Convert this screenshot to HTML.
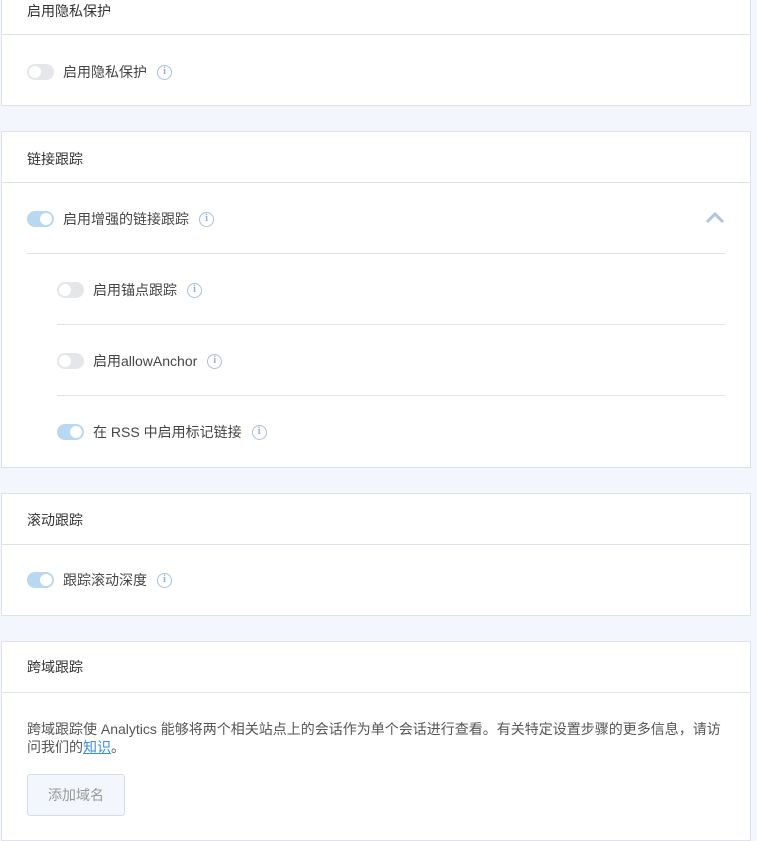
<!DOCTYPE html>
<html><head><meta charset="utf-8"><style>
*{margin:0;padding:0;box-sizing:border-box}
body{width:757px;height:821px;overflow:hidden;background:#f3f6fc;font-family:"Liberation Sans","Noto Sans CJK SC",sans-serif;font-size:14px;color:#444;position:relative}
.card{position:absolute;left:1px;width:750px;background:#fff;border:1px solid #dde3ec}
.hd{position:absolute;left:25px;font-size:14px;color:#333}
.line{position:absolute;height:1px;background:#dde3ec}
.row{position:absolute;display:flex;align-items:center;height:20px;white-space:nowrap}
.tg{width:27px;height:16px;border-radius:8px;background:#e4e6ea;position:relative;margin-right:9px}
.tg::after{content:"";position:absolute;left:2px;top:2px;width:12px;height:12px;border-radius:50%;background:#fff}
.tg.on{background:#b8d7f0}
.tg.on::after{left:13px}
.info{width:15px;height:15px;border:1.5px solid #a8c0d8;border-radius:50%;margin-left:10px;color:#8fb0cf;font-size:10px;line-height:12px;text-align:center;font-family:"Liberation Serif",serif;font-weight:bold}
</style></head><body>
<div class="card" style="top:-20px;height:126px">
<div class="hd" style="top:20px">启用隐私保护</div>
<div class="line" style="top:53px;left:0;width:748px"></div>
<div class="row" style="top:81px;left:25px"><div class="tg"></div>启用隐私保护<div class="info">i</div></div>
</div>

<div class="card" style="top:131px;height:337px">
<div class="hd" style="top:17px">链接跟踪</div>
<div class="line" style="top:50px;left:0;width:748px"></div>
<div class="row" style="top:77px;left:25px"><div class="tg on"></div>启用增强的链接跟踪<div class="info">i</div></div>
<svg style="position:absolute;left:703px;top:80px" width="20" height="12"><path d="M2 10 L10 2 L18 10" fill="none" stroke="#b0c6dc" stroke-width="3"/></svg>
<div class="line" style="top:121px;left:25px;width:698px"></div>
<div class="row" style="top:148px;left:55px"><div class="tg"></div>启用锚点跟踪<div class="info">i</div></div>
<div class="line" style="top:192px;left:55px;width:668px"></div>
<div class="row" style="top:219px;left:55px"><div class="tg"></div>启用allowAnchor<div class="info">i</div></div>
<div class="line" style="top:263px;left:55px;width:668px"></div>
<div class="row" style="top:290px;left:55px"><div class="tg on"></div>在 RSS 中启用标记链接<div class="info">i</div></div>
</div>

<div class="card" style="top:493px;height:123px">
<div class="hd" style="top:16px">滚动跟踪</div>
<div class="line" style="top:50px;left:0;width:748px"></div>
<div class="row" style="top:76px;left:25px"><div class="tg on"></div>跟踪滚动深度<div class="info">i</div></div>
</div>

<div class="card" style="top:641px;height:200px">
<div class="hd" style="top:15px">跨域跟踪</div>
<div class="line" style="top:50px;left:0;width:748px"></div>
<div style="position:absolute;left:25px;top:78px;width:700px;line-height:18px;color:#555">跨域跟踪使 Analytics 能够将两个相关站点上的会话作为单个会话进行查看。有关特定设置步骤的更多信息，请访问我们的<span style="color:#3a8ee0;text-decoration:underline">知识</span>。</div>
<div style="position:absolute;left:25px;top:132px;width:98px;height:42px;border:1px solid #d4dce8;border-radius:3px;background:#f3f6fc;color:#999;text-align:center;line-height:40px">添加域名</div>
</div>
</body></html>
